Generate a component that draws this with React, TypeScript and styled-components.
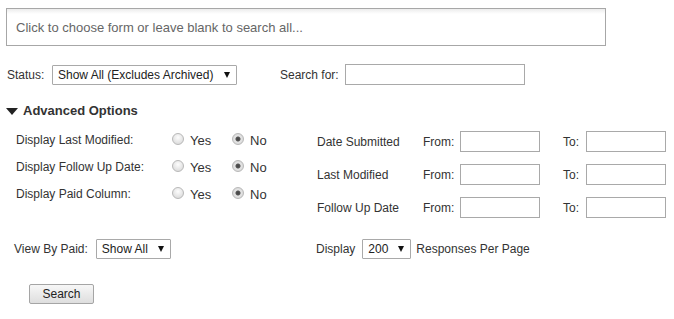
import React from "react";
import styled, { createGlobalStyle } from "styled-components";

const Global = createGlobalStyle`
  body {
    margin: 0;
    background: #fff;
    font-family: "Liberation Sans", Arial, sans-serif;
    font-size: 12px;
    color: #333;
  }
`;

const Page = styled.div`
  width: 674px;
  height: 319px;
  overflow: hidden;
`;

const FormPicker = styled.div`
  margin: 8px 0 0 6px;
  width: 600px;
  height: 38px;
  border: 1px solid #a7a7a7;
  background: linear-gradient(#ececec 0, #fff 5px);
  display: flex;
  align-items: center;
  padding-left: 9px;
  box-sizing: border-box;
  font-size: 13px;
  color: #666;
`;

const Row = styled.div<{ $top: number; $left: number }>`
  display: flex;
  align-items: center;
  margin-top: ${(p) => p.$top}px;
  padding-left: ${(p) => p.$left}px;
  height: 21px;
`;

const Label = styled.span<{ $w?: number }>`
  display: inline-block;
  width: ${(p) => (p.$w ? `${p.$w}px` : "auto")};
  flex-shrink: 0;
  white-space: nowrap;
`;

const SelectBox = styled.div<{ $w: number }>`
  width: ${(p) => p.$w}px;
  height: 18px;
  border: 1px solid #a9a9a9;
  border-radius: 1px;
  display: flex;
  align-items: center;
  justify-content: space-between;
  padding: 0 6px 0 5px;
  box-sizing: content-box;
  flex-shrink: 0;
  background: #fff;
  color: #222;
`;

const Arrow = styled.span`
  width: 0;
  height: 0;
  border-left: 3px solid transparent;
  border-right: 3px solid transparent;
  border-top: 6px solid #111;
`;

const TextInput = styled.input<{ $w: number }>`
  width: ${(p) => p.$w}px;
  height: 21px;
  box-sizing: border-box;
  border: 1px solid #a9a9a9;
  margin: 0;
  padding: 0 4px;
  flex-shrink: 0;
  font: inherit;
`;

const Header = styled.div`
  display: flex;
  align-items: center;
  margin: 17px 0 0 6px;
  height: 16px;
  font-weight: bold;
  font-size: 13px;
  color: #333;
  gap: 5px;
`;

const Tri = styled.span`
  width: 0;
  height: 0;
  border-left: 6.5px solid transparent;
  border-right: 6.5px solid transparent;
  border-top: 7px solid #222;
  margin-top: 2px;
`;

const Advanced = styled.div`
  display: flex;
  margin-top: 6px;
`;

const LeftCol = styled.div`
  width: 317px;
  padding-top: 2px;
  padding-left: 16px;
  box-sizing: border-box;
`;

const RightCol = styled.div`
  display: flex;
  flex-direction: column;
  padding-top: 1px;
`;

const RadioRow = styled.div`
  display: flex;
  align-items: center;
  height: 27px;
`;

const Option = styled.label<{ $w: number }>`
  display: flex;
  align-items: center;
  gap: 6px;
  width: ${(p) => p.$w}px;
  font-size: 13px;
  padding-top: 2px;
`;

const Radio = styled.input`
  appearance: none;
  margin: 0;
  width: 12px;
  height: 12px;
  border-radius: 50%;
  border: 1px solid #b8b8b8;
  box-sizing: border-box;
  background: radial-gradient(circle at 50% 35%, #fdfdfd 0, #dcdcdc 80%);
  margin-top: -3px;
  &:checked {
    background: radial-gradient(circle, #444 0, #555 2px, #e6e6e6 3px, #d6d6d6 80%);
  }
`;

const DateRow = styled.div`
  display: flex;
  align-items: center;
  height: 33px;
`;

const Bottom = styled.div`
  display: flex;
  align-items: center;
  margin-top: 15px;
  height: 20px;
`;

const Half = styled.div<{ $w?: number; $left: number }>`
  display: flex;
  align-items: center;
  width: ${(p) => (p.$w ? `${p.$w}px` : "auto")};
  padding-left: ${(p) => p.$left}px;
  box-sizing: border-box;
  gap: 5px;
`;

const Button = styled.button`
  margin: 25px 0 0 29px;
  width: 65px;
  height: 20px;
  border: 1px solid #a5a5a5;
  border-radius: 2px;
  background: linear-gradient(#f7f7f7, #dedede);
  font: inherit;
  color: #222;
  padding: 0;
`;

const radios = ["Display Last Modified:", "Display Follow Up Date:", "Display Paid Column:"];
const dates = ["Date Submitted", "Last Modified", "Follow Up Date"];

export default function App() {
  return (
    <Page>
      <Global />
      <FormPicker>Click to choose form or leave blank to search all...</FormPicker>
      <Row $top={18} $left={7}>
        <Label $w={45}>Status:</Label>
        <SelectBox $w={172}>
          <span>Show All (Excludes Archived)</span>
          <Arrow />
        </SelectBox>
        <Label style={{ marginLeft: 43 }} $w={65}>Search for:</Label>
        <TextInput $w={180} />
      </Row>
      <Header>
        <Tri />
        Advanced Options
      </Header>
      <Advanced>
        <LeftCol>
          {radios.map((r, i) => (
            <RadioRow key={i}>
              <Label $w={156}>{r}</Label>
              <Option $w={60}>
                <Radio type="radio" name={`r${i}`} />
                Yes
              </Option>
              <Option $w={40}>
                <Radio type="radio" name={`r${i}`} defaultChecked />
                No
              </Option>
            </RadioRow>
          ))}
        </LeftCol>
        <RightCol>
          {dates.map((d) => (
            <DateRow key={d}>
              <Label $w={106}>{d}</Label>
              <Label $w={37}>From:</Label>
              <TextInput $w={80} />
              <Label style={{ marginLeft: 23 }} $w={23}>To:</Label>
              <TextInput $w={80} />
            </DateRow>
          ))}
        </RightCol>
      </Advanced>
      <Bottom>
        <Half $w={316} $left={14}>
          <Label style={{ marginRight: 3 }}>View By Paid:</Label>
          <SelectBox $w={62}>
            <span>Show All</span>
            <Arrow />
          </SelectBox>
        </Half>
        <Half $left={0}>
          <Label style={{ marginRight: 2 }}>Display</Label>
          <SelectBox $w={36}>
            <span>200</span>
            <Arrow />
          </SelectBox>
          <Label>Responses Per Page</Label>
        </Half>
      </Bottom>
      <Button>Search</Button>
    </Page>
  );
}
